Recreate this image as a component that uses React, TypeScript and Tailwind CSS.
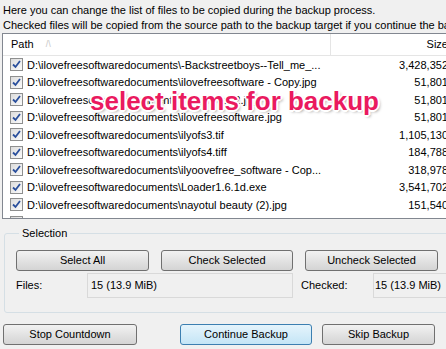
import React from "react";

const rows: [string, string][] = [
  ["D:\\ilovefreesoftwaredocuments\\-Backstreetboys--Tell_me_...", "3,428,352"],
  ["D:\\ilovefreesoftwaredocuments\\ilovefreesoftware - Copy.jpg", "51,801"],
  ["D:\\ilovefreesoftwaredocuments\\ilovefreesu2.jpg", "51,801"],
  ["D:\\ilovefreesoftwaredocuments\\ilovefreesoftware.jpg", "51,801"],
  ["D:\\ilovefreesoftwaredocuments\\ilyofs3.tif", "1,105,130"],
  ["D:\\ilovefreesoftwaredocuments\\ilyofs4.tiff", "184,788"],
  ["D:\\ilovefreesoftwaredocuments\\ilyoovefree_software - Cop...", "318,978"],
  ["D:\\ilovefreesoftwaredocuments\\Loader1.6.1d.exe", "3,541,702"],
  ["D:\\ilovefreesoftwaredocuments\\nayotul beauty (2).jpg", "151,540"],
  ["D:\\ilovefreesoftwaredocuments\\nayotul beauty (3).jpg", "151,540"],
];

function Check() {
  return (
    <span className="w-[13px] h-[13px] shrink-0 border border-[#8e8f8f] bg-gradient-to-br from-[#dcdcdc] to-[#fbfbfb] flex items-center justify-center">
      <svg width="9" height="9" viewBox="0 0 9 9">
        <path d="M1 4.5 L3.5 7 L8 1" fill="none" stroke="#2a4f9c" strokeWidth="1.8" />
      </svg>
    </span>
  );
}

function Btn({ label, w, def }: { label: string; w: string; def?: boolean }) {
  return (
    <div
      className={
        "h-[21px] rounded-[3px] border flex items-center justify-center shrink-0 " +
        w +
        (def
          ? " border-[#3c7fb1] bg-gradient-to-b from-[#e5f4fc] to-[#c4e5f6]"
          : " border-[#707070] bg-gradient-to-b from-[#f2f2f2] to-[#d4d4d4]")
      }
    >
      {label}
    </div>
  );
}

export default function App() {
  return (
    <div
      className="w-[446px] h-[349px] bg-[#f0f0f0] overflow-hidden relative text-[11px] text-black"
      style={{ fontFamily: '"Liberation Sans", Arial, sans-serif' }}
    >
      <div className="pl-[3px] pt-[3px] leading-[15px] whitespace-nowrap">
        <div>Here you can change the list of files to be copied during the backup process.</div>
        <div>Checked files will be copied from the source path to the backup target if you continue the backup.</div>
      </div>
      <div className="ml-[2px] w-[470px] h-[186px] border border-[#828790] bg-white overflow-hidden">
        <div className="h-[22px] flex border-b border-[#e5e5e5] whitespace-nowrap">
          <div className="w-[328px] border-r border-[#e5e5e5] flex items-center pl-[8px] gap-[12px]">
            <span>Path</span>
            <span className="text-[#c8c8c8] text-[9px]">/\</span>
          </div>
          <div className="w-[117px] flex items-center justify-end">Size</div>
        </div>
        <div>
          {rows.map(([p, s], i) => (
            <div key={i} className="h-[17.5px] flex items-center whitespace-nowrap">
              <div className="w-[328px] flex items-center pl-[7px] gap-[4px]">
                <Check />
                <span>{p}</span>
              </div>
              <div className="w-[117px] text-right">{s}</div>
            </div>
          ))}
        </div>
      </div>
      <fieldset className="ml-[4px] mt-[7px] w-[470px] border border-[#d5dfe5] rounded-[3px] px-[11px] pb-[14px]">
        <legend className="ml-[3px] px-[3px] leading-[14px]">Selection</legend>
        <div className="flex gap-[12px] mt-[10px]">
          <Btn label="Select All" w="w-[133px]" />
          <Btn label="Check Selected" w="w-[132px]" />
          <Btn label="Uncheck Selected" w="w-[133px]" />
          <Btn label="Invert Selection" w="w-[133px]" />
        </div>
        <div className="flex items-center mt-[2px] h-[25px]">
          <span className="w-[71px]">Files:</span>
          <div className="w-[206px] h-[25px] border border-[#d9d9d9] flex items-center pl-[3px]">15 (13.9 MiB)</div>
          <span className="w-[80px] pl-[8px]">Checked:</span>
          <div className="w-[100px] h-[25px] border border-[#d9d9d9] flex items-center pl-[1px]">15 (13.9 MiB)</div>
        </div>
      </fieldset>
      <div className="flex ml-[3px] mt-[11px]">
        <Btn label="Stop Countdown" w="w-[134px]" />
        <div className="w-[43px]" />
        <Btn label="Continue Backup" w="w-[132px]" def />
        <div className="w-[10px]" />
        <Btn label="Skip Backup" w="w-[113px]" />
      </div>
      <div
        className="absolute left-[90px] top-[88px] text-[26px] font-bold text-[#ea1a5f] whitespace-nowrap leading-none"
        style={{
          textShadow:
            "1px 1px 0 #fff, -1px -1px 0 #fff, 1px -1px 0 #fff, -1px 1px 0 #fff, 0 2px 0 #fff, 2px 0 0 #fff, -2px 0 0 #fff, 0 -2px 0 #fff, 2px 2px 3px rgba(0,0,0,0.35)",
        }}
      >
        select items for backup
      </div>
    </div>
  );
}
